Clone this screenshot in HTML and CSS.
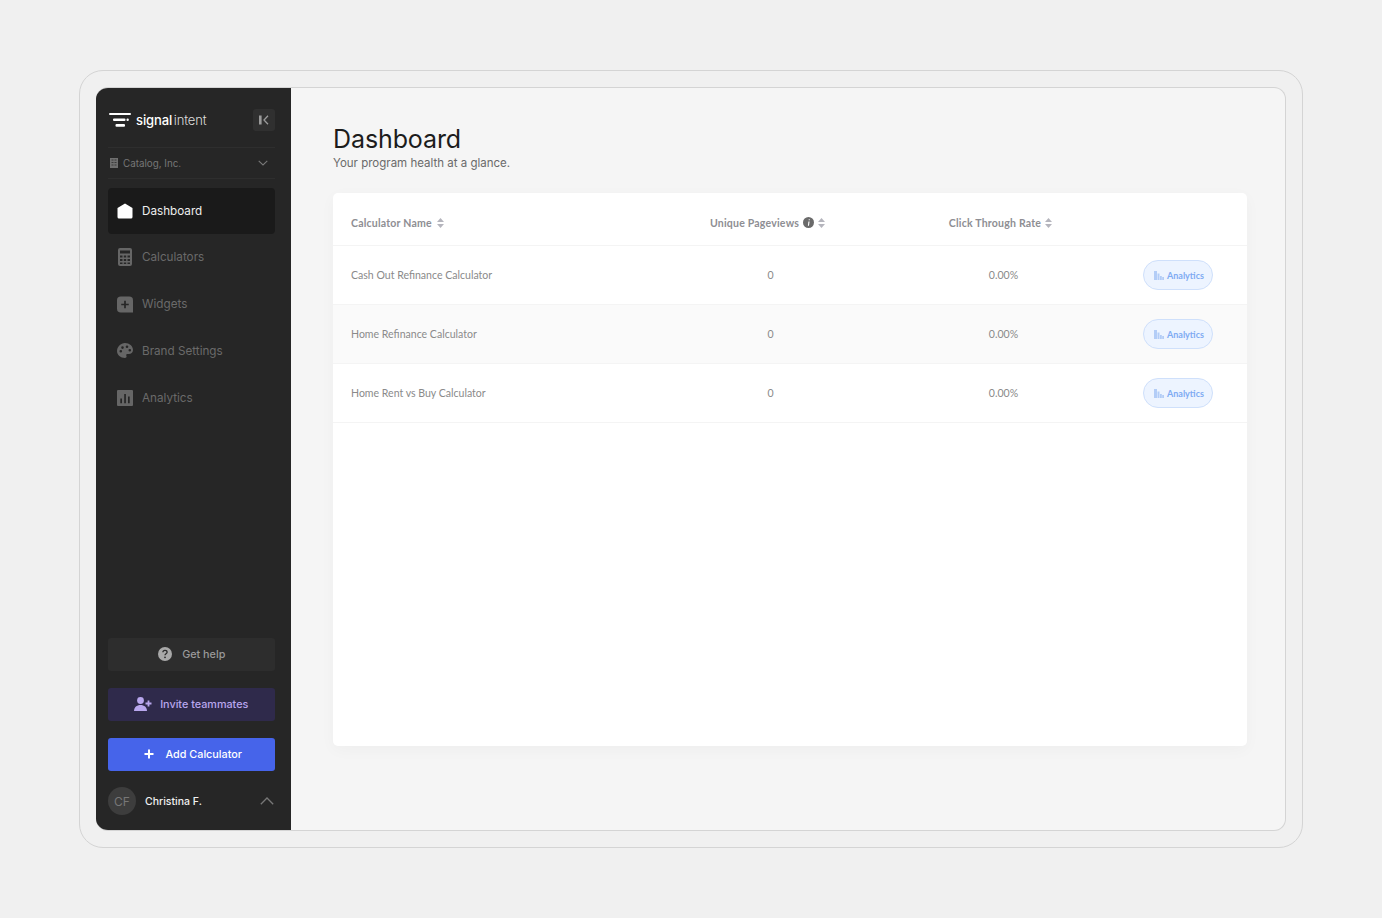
FILE: index.html
```html
<!DOCTYPE html>
<html lang="en">
<head>
<meta charset="utf-8">
<title>Dashboard</title>
<link rel="stylesheet" href="styles.css">
</head>
<body>
<div class="frame">
  <div class="app">
    <aside class="sidebar">
      <div class="brand">
        <svg class="logo" viewBox="0 0 22 14" width="22" height="14"><rect x="0" y="0" width="22" height="2" rx="1" fill="#fff"/><rect x="4" y="5.500" width="12.500" height="2.400" rx="1" fill="#fff"/><rect x="17.500" y="5.500" width="2.300" height="2.400" rx="1" fill="#fff"/><rect x="6.500" y="11" width="9.500" height="2.800" rx="1" fill="#fff"/></svg>
        <span class="wordmark"><b>signal</b><i>intent</i></span>
        <span class="collapse"><svg viewBox="0 0 12 12" width="12" height="12"><rect x="1" y="1.500" width="2.600" height="9" fill="#9a9a9a"/><path d="M10 1.800 6 6l4 4.200" fill="none" stroke="#9a9a9a" stroke-width="1.300"/></svg></span>
      </div>
      <div class="org">
        <svg viewBox="0 0 8 10" width="8" height="10"><path fill="#6f6f6f" d="M0 0h8v10H0z"/><path fill="#3a3a3a" d="M1.500 1.500h2v1h-2zM4.500 1.500h2v1h-2zM1.500 4h2v1h-2zM4.500 4h2v1h-2zM1.500 6.500h2v1h-2zM4.500 6.500h2v1h-2z"/></svg>
        <span class="org-name">Catalog, Inc.</span>
        <svg class="org-chev" viewBox="0 0 10 6" width="10" height="6"><path d="M.7.8 5 5l4.300-4.200" fill="none" stroke="#777" stroke-width="1.100"/></svg>
      </div>
      <nav class="nav">
        <a class="nav-item active">
          <svg viewBox="0 0 16 16" width="16" height="16"><path fill="#fff" d="M8 .5 15.500 5V14a1.500 1.500 0 0 1-1.500 1.500H2A1.500 1.500 0 0 1 .5 14V5z"/></svg>
          <span>Dashboard</span>
        </a>
        <a class="nav-item">
          <svg viewBox="0 0 16 18" width="16" height="18"><path fill="#666" fill-rule="evenodd" d="M3 0h10a2 2 0 0 1 2 2v14a2 2 0 0 1-2 2H3a2 2 0 0 1-2-2V2a2 2 0 0 1 2-2zm0 2.500v3h10v-3zM3 7.500v2h2.500v-2zm3.800 0v2h2.400v-2zm3.700 0v2H13v-2zM3 11v2h2.500v-2zm3.800 0v2h2.400v-2zm3.700 0v2H13v-2zM3 14.500v1.500h2.500v-1.500zm3.800 0v1.500h2.400v-1.500zm3.700 0v1.500H13v-1.500z"/></svg>
          <span>Calculators</span>
        </a>
        <a class="nav-item">
          <svg viewBox="0 0 17 17" width="17" height="17"><path fill="#666" d="M4 0h9a4 4 0 0 1 4 4v13H4a4 4 0 0 1-4-4V4a4 4 0 0 1 4-4z"/><path d="M8.500 4.500v8M4.500 8.500h8" stroke="#262626" stroke-width="1.800"/></svg>
          <span>Widgets</span>
        </a>
        <a class="nav-item">
          <svg viewBox="0 0 16 16" width="16" height="16"><path fill="#666" fill-rule="evenodd" d="M8 0c4.400 0 8 3 8 6.900 0 2.400-2 4-4.200 4H10.300c-.9 0-1.400.8-1 1.500.4.800.3 1.600-.2 2.200-.3.300-.7.400-1.100.4C3.600 15 0 11.900 0 8s3.600-8 8-8zM3.800 7a1.300 1.300 0 1 0 0 2.600 1.300 1.300 0 0 0 0-2.600zM5.500 3.300a1.300 1.300 0 1 0 0 2.600 1.300 1.300 0 0 0 0-2.600zM10 2.500a1.300 1.300 0 1 0 0 2.600 1.300 1.300 0 0 0 0-2.600zM12.800 6a1.300 1.300 0 1 0 0 2.600 1.300 1.300 0 0 0 0-2.600z"/></svg>
          <span>Brand Settings</span>
        </a>
        <a class="nav-item">
          <svg viewBox="0 0 16 16" width="16" height="16"><path fill="#666" d="M1 0h14a1 1 0 0 1 1 1v14a1 1 0 0 1-1 1H1a1 1 0 0 1-1-1V1a1 1 0 0 1 1-1z"/><path fill="#262626" d="M3.300 8.500h1.700v4.700H3.300zM7.200 4h1.700v9.200H7.200zM11 6.500h1.700v6.700H11z"/></svg>
          <span>Analytics</span>
        </a>
      </nav>
      <div class="actions">
        <a class="btn btn-help">
          <svg viewBox="0 0 14 14" width="14" height="14"><circle cx="7" cy="7" r="7" fill="#a8a8a8"/><path d="M4.900 5.300c0-1.200 1-1.900 2.100-1.900s2.100.7 2.100 1.800c0 1.500-2.100 1.500-2.100 3" fill="none" stroke="#2a2a2a" stroke-width="1.300"/><circle cx="7" cy="10.300" r=".9" fill="#2a2a2a"/></svg>
          <span>Get help</span>
        </a>
        <a class="btn btn-invite">
          <svg viewBox="0 0 18 14" width="18" height="14"><circle cx="6.500" cy="3.500" r="3.400" fill="#b9a7ee"/><path fill="#b9a7ee" d="M0 14c0-3.800 2.800-6 6.500-6s6.500 2.200 6.500 6z"/><path d="M14.500 3.500v6M11.500 6.500h6" stroke="#b9a7ee" stroke-width="1.800"/></svg>
          <span>Invite teammates</span>
        </a>
        <a class="btn btn-add">
          <svg viewBox="0 0 10 10" width="10" height="10"><path d="M5 .5v9M.5 5h9" stroke="#fff" stroke-width="2"/></svg>
          <span>Add Calculator</span>
        </a>
      </div>
      <div class="user">
        <span class="avatar">CF</span>
        <span class="user-name">Christina F.</span>
        <svg class="user-chev" viewBox="0 0 14 8" width="14" height="8"><path d="M.8 7.200 7 1l6.200 6.200" fill="none" stroke="#777" stroke-width="1.300"/></svg>
      </div>
    </aside>
    <main class="main">
      <h1 class="title">Dashboard</h1>
      <p class="subtitle">Your program health at a glance.</p>
      <section class="card">
        <div class="row head">
          <div class="cell-head">Calculator Name<svg class="sort" viewBox="0 0 7 10" width="7" height="10"><path fill="#b5b5bd" d="M3.500 0 7 4H0zM3.500 10 0 6h7z"/></svg></div>
          <div class="cell-head cell-head-center">Unique Pageviews<svg class="info" viewBox="0 0 11 11" width="11" height="11"><circle cx="5.500" cy="5.500" r="5.500" fill="#6a6a6a"/><path d="M5.700 2.200h1.100v1.100H5.700zM5.400 4.600h1.200L6 8.800H4.900z" fill="#fff"/></svg><svg class="sort" viewBox="0 0 7 10" width="7" height="10"><path fill="#b5b5bd" d="M3.500 0 7 4H0zM3.500 10 0 6h7z"/></svg></div>
          <div class="cell-head cell-head-center">Click Through Rate<svg class="sort" viewBox="0 0 7 10" width="7" height="10"><path fill="#b5b5bd" d="M3.500 0 7 4H0zM3.500 10 0 6h7z"/></svg></div>
          <div></div>
        </div>
        <div class="row">
          <div class="cell-name">Cash Out Refinance Calculator</div>
          <div class="cell-center">0</div>
          <div class="cell-center">0.00%</div>
          <div class="cell-end"><a class="pill"><svg viewBox="0 0 10 9" width="10" height="9"><path fill="#b3cdf7" d="M0 0h3v9H0zM3.500 2.500h2V9h-2zM6 5h1.800v4H6zM8.200 6H10v3H8.200z"/></svg>Analytics</a></div>
        </div>
        <div class="row alt">
          <div class="cell-name">Home Refinance Calculator</div>
          <div class="cell-center">0</div>
          <div class="cell-center">0.00%</div>
          <div class="cell-end"><a class="pill"><svg viewBox="0 0 10 9" width="10" height="9"><path fill="#b3cdf7" d="M0 0h3v9H0zM3.500 2.500h2V9h-2zM6 5h1.800v4H6zM8.200 6H10v3H8.200z"/></svg>Analytics</a></div>
        </div>
        <div class="row">
          <div class="cell-name">Home Rent vs Buy Calculator</div>
          <div class="cell-center">0</div>
          <div class="cell-center">0.00%</div>
          <div class="cell-end"><a class="pill"><svg viewBox="0 0 10 9" width="10" height="9"><path fill="#b3cdf7" d="M0 0h3v9H0zM3.500 2.500h2V9h-2zM6 5h1.800v4H6zM8.200 6H10v3H8.200z"/></svg>Analytics</a></div>
        </div>
      </section>
    </main>
  </div>
</div>
</body>
</html>
```
FILE: styles.css
```css
* { box-sizing: border-box; }
html, body { margin: 0; height: 100%; }
body {
  background: #f0f0f0;
  padding: 70px 79px;
  font-family: Inter, "Liberation Sans", sans-serif;
  overflow: hidden;
}
.frame {
  height: 778px;
  padding: 16px;
  border: 1px solid #d4d4d4;
  border-radius: 24px;
}
.app {
  display: flex;
  height: 744px;
  border: 1px solid #d4d4d4;
  border-left: 0;
  border-radius: 12px;
  background: #f5f5f5;
  overflow: hidden;
}
.sidebar {
  display: flex;
  flex-direction: column;
  flex: 0 0 195px;
  margin-top: -1px;
  margin-bottom: -1px;
  padding: 0 16.500px 0 12px;
  background: #262626;
}
.brand {
  display: flex;
  align-items: center;
  height: 61px;
  padding-top: 5px;
  border-bottom: 1px solid #2e2e2e;
}
.logo { margin-right: 5px; margin-left: 1px; }
.wordmark { flex: 1; font-size: 13px; color: #fff; letter-spacing: -.1px; }
.wordmark b { font-weight: 500; }
.wordmark i { font-style: normal; font-weight: 300; color: #ddd; margin-left: 1.500px; }
.collapse {
  display: flex;
  align-items: center;
  justify-content: center;
  width: 22px;
  height: 22px;
  border-radius: 3px;
  background: #303030;
}
.org {
  display: flex;
  align-items: center;
  height: 31px;
  padding: 0 7px 0 2px;
  border-bottom: 1px solid #2e2e2e;
  font-size: 9.800px;
  color: #767676;
}
.org-name { flex: 1; margin-left: 5px; }
.nav { display: flex; flex-direction: column; margin-top: 9px; }
.nav-item {
  display: flex;
  align-items: center;
  gap: 9px;
  height: 46px;
  margin-bottom: .900px;
  padding: 0 0 1px 9px;
  border-radius: 4px;
  font-size: 11.700px;
  color: #6a6a6a;
}
.nav-item svg { flex: 0 0 16px; }
.nav-item.active { background: #1a1a1a; color: #eee; }
.actions {
  display: flex;
  flex-direction: column;
  gap: 17px;
  margin-top: auto;
}
.btn {
  display: flex;
  align-items: center;
  justify-content: center;
  height: 33px;
  padding-bottom: 1px;
  border-radius: 3px;
  font-size: 10.800px;
  font-weight: 500;
}
.btn-help { gap: 10px; padding-left: 1px; background: #2d2d2d; color: #9a9a9a; }
.btn-invite { gap: 8px; background: #2f2a4b; color: #b9a7ee; }
.btn-add { gap: 12px; padding-left: 3px; background: #4664ea; color: #fff; }
.user {
  display: flex;
  align-items: center;
  height: 28px;
  margin: 16px 0;
}
.avatar {
  display: flex;
  align-items: center;
  justify-content: center;
  width: 28px;
  height: 28px;
  border-radius: 50%;
  background: #3d3d3d;
  color: #777;
  font-size: 12px;
}
.user-name { flex: 1; margin-left: 9px; font-size: 10.500px; font-weight: 500; color: #f0f0f0; }
.user-chev { margin-right: 1px; }
.main { flex: 1; padding: 36px 38px 0 42px; }
.title { margin: 0; font-size: 25px; font-weight: 400; line-height: 31px; color: #1c1c1c; letter-spacing: -.1px; }
.subtitle { margin: 0; font-size: 11.500px; line-height: 17px; color: #6a6a6a; }
.card {
  height: 553px;
  margin-top: 21px;
  border-radius: 5px;
  background: #fff;
  box-shadow: 0 4px 16px rgba(0, 0, 0, .03);
  overflow: hidden;
}
.row {
  display: grid;
  grid-template-columns: 299.500px 240px 226px 1fr;
  align-items: center;
  height: 59px;
  padding: 0 34px 0 18px;
  border-bottom: 1px solid #f4f4f4;
  font-family: Lato, "Liberation Sans", sans-serif;
  font-size: 10.550px;
  color: #8a8a8a;
}
.row.alt { background: #fafafa; }
.head { height: 53px; padding-top: 7px; font-weight: 700; letter-spacing: .2px; color: #8e8e93; }
.cell-head { display: flex; align-items: center; gap: 5px; }
.cell-head-center { justify-content: center; gap: 4px; padding-right: 6px; }
.cell-center { text-align: center; white-space: nowrap; }
.cell-end { display: flex; justify-content: flex-end; }
.info { margin-bottom: 1px; }
.pill {
  display: inline-flex;
  align-items: center;
  gap: 3px;
  width: 70px;
  height: 30px;
  padding-left: 10px;
  border: 1px solid #cfe0fb;
  border-radius: 15px;
  background: #edf4ff;
  color: #7fabf3;
  font-size: 9px;
  font-weight: 700;
}
```
